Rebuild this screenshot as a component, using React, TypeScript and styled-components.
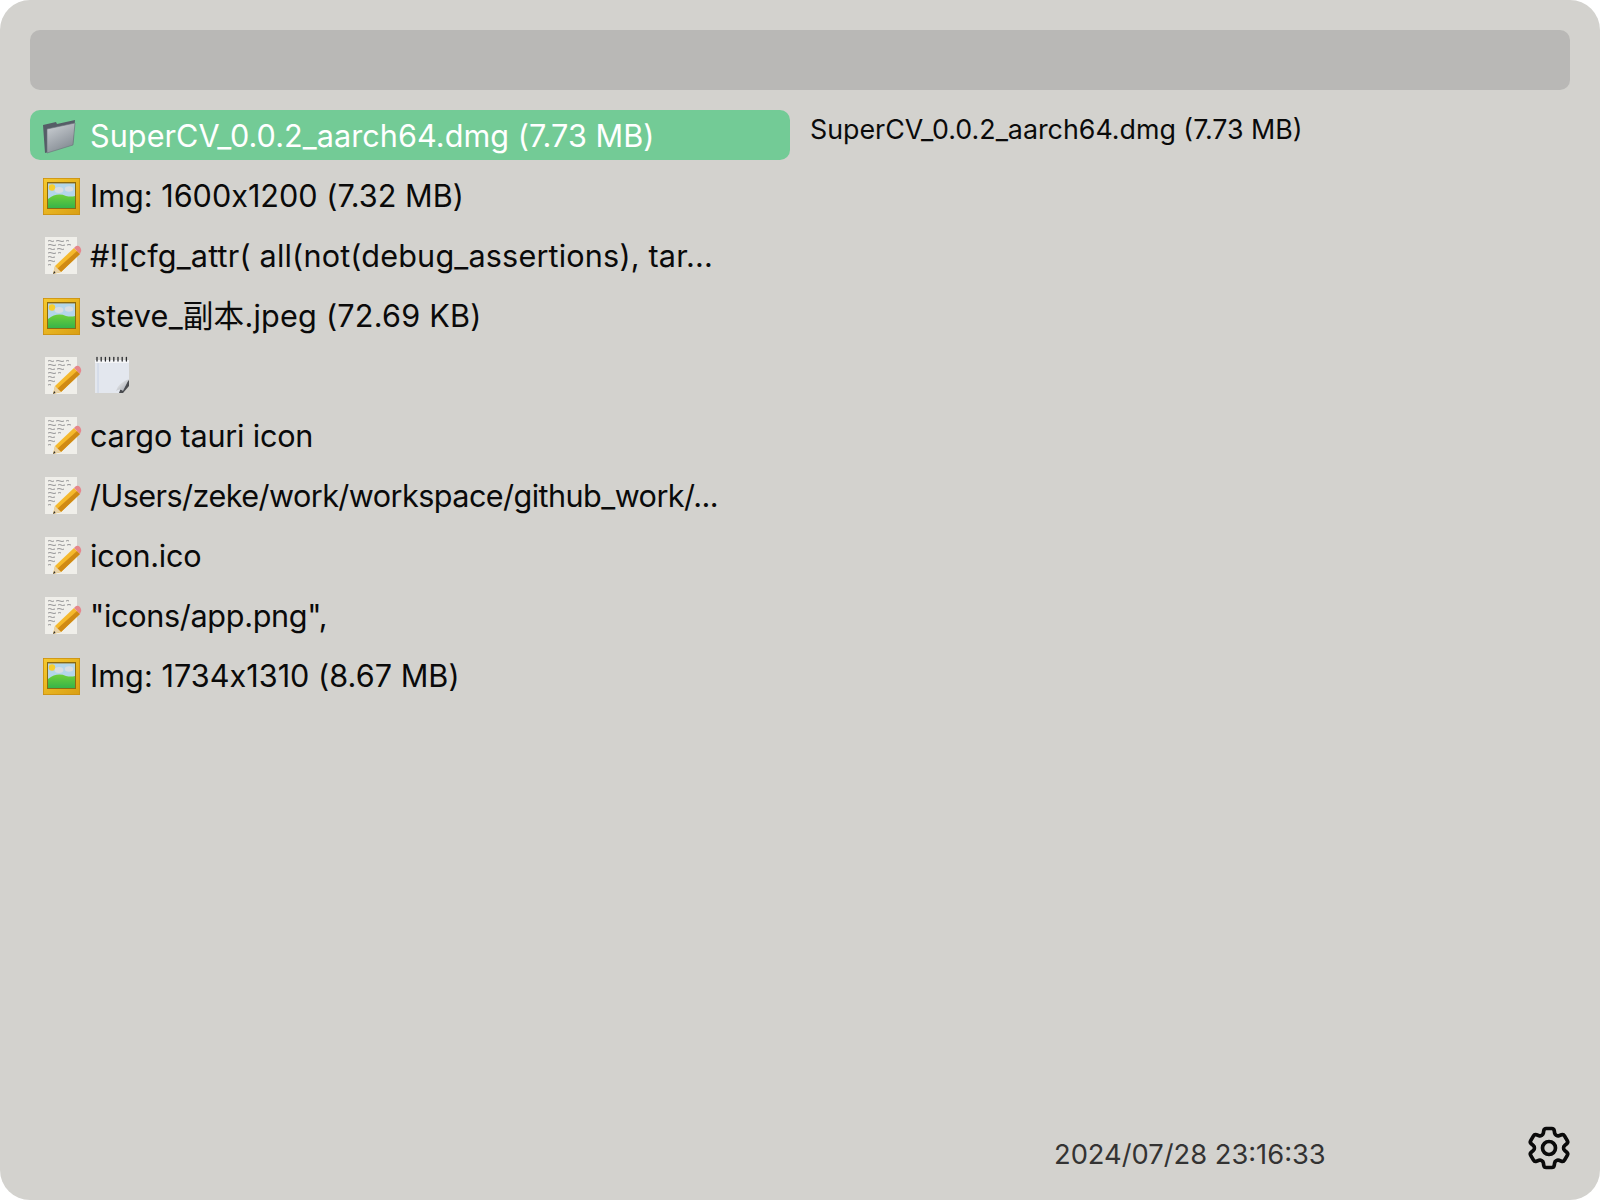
import React from "react";
import styled, { createGlobalStyle } from "styled-components";
import { HiOutlineCog6Tooth } from "react-icons/hi2";

const GlobalStyle = createGlobalStyle`
  html, body {
    margin: 0;
    padding: 0;
    background: #ffffff;
  }
  * {
    box-sizing: border-box;
  }
`;

const Window = styled.div`
  display: flex;
  flex-direction: column;
  width: 1600px;
  height: 1200px;
  padding: 30px 30px 0;
  background-color: #d3d2ce;
  border-radius: 30px;
  font-family: Inter, "Noto Sans CJK SC", sans-serif;
  overflow: hidden;
`;
const SearchBar = styled.div`
  flex: none;
  height: 60px;
  background-color: #b9b8b6;
  border-radius: 10px;
`;
const Content = styled.div`
  flex: 1;
  display: flex;
  gap: 20px;
  margin-top: 20px;
`;
const List = styled.div`
  flex: none;
  display: flex;
  flex-direction: column;
  gap: 10px;
  width: 760px;
`;
const Row = styled.div<{ $active?: boolean; $tracking?: number }>`
  display: flex;
  align-items: center;
  gap: 8px;
  height: 50px;
  padding-left: 12px;
  border-radius: 10px;
  background-color: ${(p) => (p.$active ? "#73cb96" : "transparent")};
  color: ${(p) => (p.$active ? "#ffffff" : "#0a0a0a")};
  font-size: 30.6px;
  line-height: 50px;
  font-feature-settings: "calt" 0;
  letter-spacing: ${(p) => p.$tracking ?? 0}px;
  white-space: nowrap;
`;
const RowLabel = styled.span`
  margin-top: 2px;
`;
const RowIcon = styled.svg`
  flex: none;
  width: 40px;
  height: 40px;
`;
const Preview = styled.div`
  flex: 1;
  display: flex;
  flex-direction: column;
  justify-content: space-between;
`;
const PreviewText = styled.div`
  padding-top: 1px;
  font-size: 26.8px;
  line-height: 36px;
  color: #0a0a0a;
  white-space: nowrap;
`;
const Footer = styled.div`
  display: flex;
  align-items: center;
  justify-content: space-between;
  height: 50px;
  margin-bottom: 24px;
  padding-left: 244px;
`;
const Timestamp = styled.span`
  font-size: 27.3px;
  color: #333333;
  margin-top: 6px;
`;
const GearButton = styled.div`
  display: flex;
  margin-right: -5px;
  margin-top: -6px;
  font-size: 52px;
  color: #0a0a0a;
  & path {
    stroke-width: 1.7;
  }
`;

const FolderIcon = () => (
  <RowIcon viewBox="0 -1 40 40">
    <defs>
      <linearGradient id="folderFront" x1="0" y1="0" x2="0.5" y2="1">
        <stop offset="0" stopColor="#cfd3d7" />
        <stop offset="1" stopColor="#858c94" />
      </linearGradient>
    </defs>
    <path d="M1 9 L14 6 L15 8 L33 4 L31 28 L3 37 Z" fill="#565d67" />
    <path d="M5 13 L33 7 L31 29 L5 37 Z" fill="url(#folderFront)" stroke="#6a7079" strokeWidth="0.6" />
  </RowIcon>
);

const PictureIcon = () => (
  <RowIcon viewBox="0 0 40 40">
    <defs>
      <linearGradient id="grass" x1="0" y1="0" x2="0" y2="1">
        <stop offset="0" stopColor="#6fcf3a" />
        <stop offset="1" stopColor="#37b44a" />
      </linearGradient>
      <linearGradient id="frame" x1="0" y1="0" x2="1" y2="1">
        <stop offset="0" stopColor="#f6c92e" />
        <stop offset="1" stopColor="#d99f14" />
      </linearGradient>
    </defs>
    <rect x="1" y="3" width="37" height="37" fill="#c98f12" />
    <rect x="1.8" y="3.8" width="35.4" height="35.4" fill="url(#frame)" />
    <rect x="5" y="7" width="29" height="27" fill="#8a6a12" />
    <rect x="6" y="8.4" width="27" height="24.6" fill="#b4d6ea" />
    <circle cx="10" cy="12.5" r="3.2" fill="#f6cf2f" />
    <ellipse cx="17" cy="15" rx="4.4" ry="3" fill="#d9dde2" />
    <ellipse cx="27" cy="14" rx="4.2" ry="2.8" fill="#d9dde2" />
    <path d="M6 24 Q15 17 24 21 Q29 22 33 21 L33 33 L6 33 Z" fill="url(#grass)" />
  </RowIcon>
);

const MemoIcon = () => (
  <RowIcon viewBox="0 0 40 40">
    <rect x="3" y="2" width="32" height="37" fill="#f0efea" />
    <g stroke="#8a8a8c" strokeWidth="0.9" fill="none">
      <path d="M6 6 q2 -1 3 0 t3 0 M14 6 q2 -1 4 0 t4 0 M24 6 q2 -1 3 0" />
      <path d="M6 10 q2 -1 4 0 t4 0 M16 10 q2 -1 3 0 t4 0 M25 10 q2 -1 4 0" />
      <path d="M6 14 q2 -1 3 0 t4 0 M15 14 q2 -1 4 0 t3 0" />
      <path d="M6 18 q2 -1 4 0 t4 0 M16 18 q2 -1 3 0" />
      <path d="M6 22 q2 -1 3 0 t4 0" />
      <path d="M6 26 q2 -1 4 0 t3 0" />
      <path d="M6 30 q2 -1 3 0" />
    </g>
    <path d="M13 31 L32 13 L38 19 L19 37 L11 39 Z" fill="#f5b92c" />
    <path d="M15.5 33.5 L35 16 L38 19 L19 37 Z" fill="#d08a14" />
    <path d="M32 13 L34 11 Q36 10 38 12 L39 14 Q40 16 38 19 Z" fill="#e5878c" />
    <path d="M13 31 L19 37 L11 39 Z" fill="#e9d3a8" />
    <path d="M12.2 36 L13.5 37.8 L11 39 Z" fill="#333333" />
  </RowIcon>
);

const NotepadIcon = () => (
  <RowIcon viewBox="0 0 40 40">
    <defs>
      <linearGradient id="curl" x1="0" y1="0" x2="1" y2="1">
        <stop offset="0" stopColor="#ffffff" />
        <stop offset="1" stopColor="#9ba0a8" />
      </linearGradient>
    </defs>
    <path d="M5 5 H39 V25 L29 38 H5 Z" fill="#e3e7ee" />
    <path d="M8 5 V38" stroke="#c8d2e4" strokeWidth="1" />
    <rect x="5" y="5" width="34" height="3" fill="#f4f5f7" />
    <g stroke="#2b2d30" strokeWidth="1.3" strokeLinecap="round">
      <path d="M7 2.5 V6" />
      <path d="M11.2 2.5 V6" />
      <path d="M15.4 2.5 V6" />
      <path d="M19.6 2.5 V6" />
      <path d="M23.8 2.5 V6" />
      <path d="M28 2.5 V6" />
      <path d="M32.2 2.5 V6" />
      <path d="M36.4 2.5 V6" />
    </g>
    <path d="M29 38 Q31 31 39 25 L39 31 L33 38 Z" fill="#4a4c50" />
    <path d="M26 36 Q28 28 39 24 Q36 30 33 36 Q30 33 26 36 Z" fill="url(#curl)" />
  </RowIcon>
);

type Item = {
  icon: "folder" | "picture" | "memo";
  text?: string;
  tracking?: number;
};

const items: Item[] = [
  { icon: "folder", text: "SuperCV_0.0.2_aarch64.dmg (7.73 MB)", tracking: 0.06 },
  { icon: "picture", text: "Img: 1600x1200 (7.32 MB)" },
  { icon: "memo", text: "#![cfg_attr( all(not(debug_assertions), tar...", tracking: 0.17 },
  { icon: "picture", text: "steve_副本.jpeg (72.69 KB)", tracking: 0.22 },
  { icon: "memo" },
  { icon: "memo", text: "cargo tauri icon", tracking: -0.2 },
  { icon: "memo", text: "/Users/zeke/work/workspace/github_work/...", tracking: -0.56 },
  { icon: "memo", text: "icon.ico", tracking: -0.25 },
  { icon: "memo", text: '"icons/app.png",', tracking: -0.32 },
  { icon: "picture", text: "Img: 1734x1310 (8.67 MB)", tracking: 0.04 },
];

const icons = {
  folder: <FolderIcon />,
  picture: <PictureIcon />,
  memo: <MemoIcon />,
};

const App = () => {
  return (
    <Window>
      <GlobalStyle />
      <SearchBar />
      <Content>
        <List>
          {items.map((item, i) => (
            <Row key={i} $active={i === 0} $tracking={item.tracking}>
              {icons[item.icon]}
              {item.text ? <RowLabel>{item.text}</RowLabel> : <NotepadIcon />}
            </Row>
          ))}
        </List>
        <Preview>
          <PreviewText>SuperCV_0.0.2_aarch64.dmg (7.73 MB)</PreviewText>
          <Footer>
            <Timestamp>2024/07/28 23:16:33</Timestamp>
            <GearButton>
              <HiOutlineCog6Tooth />
            </GearButton>
          </Footer>
        </Preview>
      </Content>
    </Window>
  );
};

export default App;
